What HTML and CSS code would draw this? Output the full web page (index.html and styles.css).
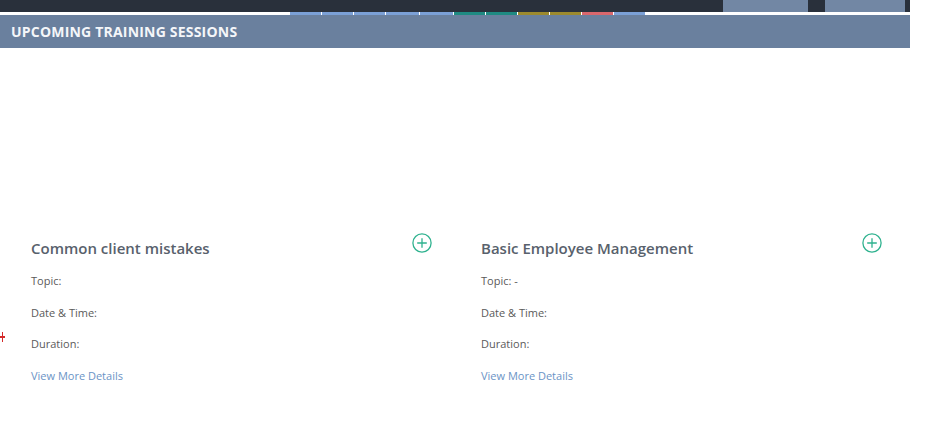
FILE: index.html
```html
<!DOCTYPE html>
<html lang="en">
<head>
<meta charset="utf-8">
<title>Upcoming Training Sessions</title>
<link rel="stylesheet" href="styles.css">
</head>
<body>
<div class="page">
  <div class="topbar">
    <div class="topbar-fill"></div>
    <div class="tab tab-a"></div>
    <div class="tab-sep"></div>
    <div class="tab tab-b"></div>
    <div class="tab-sep tab-end"></div>
  </div>
  <div class="strip">
    <div class="segments">
      <span class="seg seg-blue"></span>
      <span class="seg seg-blue"></span>
      <span class="seg seg-blue"></span>
      <span class="seg seg-blue"></span>
      <span class="seg seg-blue"></span>
      <span class="seg seg-teal"></span>
      <span class="seg seg-teal"></span>
      <span class="seg seg-olive"></span>
      <span class="seg seg-olive"></span>
      <span class="seg seg-red"></span>
      <span class="seg seg-blue"></span>
    </div>
  </div>
  <div class="section-header">UPCOMING TRAINING SESSIONS</div>

  <div class="cards">
    <div class="card">
      <div class="card-head">
        <h3 class="card-title">Common client mistakes</h3>
        <svg class="add-icon" width="20" height="20" viewBox="0 0 20 20" aria-hidden="true">
          <circle cx="10" cy="10" r="9.1" fill="none" stroke="#2fb28f" stroke-width="1.3"/>
          <path d="M10 5.2V14.8M5.2 10H14.8" stroke="#2fb28f" stroke-width="1.3" fill="none"/>
        </svg>
      </div>
      <div class="row">Topic:</div>
      <div class="row">Date &amp; Time:</div>
      <div class="row">Duration:</div>
      <div class="row"><a class="more" href="#">View More Details</a></div>
    </div>
    <div class="card">
      <div class="card-head">
        <h3 class="card-title">Basic Employee Management</h3>
        <svg class="add-icon" width="20" height="20" viewBox="0 0 20 20" aria-hidden="true">
          <circle cx="10" cy="10" r="9.1" fill="none" stroke="#2fb28f" stroke-width="1.3"/>
          <path d="M10 5.2V14.8M5.2 10H14.8" stroke="#2fb28f" stroke-width="1.3" fill="none"/>
        </svg>
      </div>
      <div class="row">Topic: -</div>
      <div class="row">Date &amp; Time:</div>
      <div class="row">Duration:</div>
      <div class="row"><a class="more" href="#">View More Details</a></div>
    </div>
  </div>
  <div class="red-mark"><span class="rm-h"></span><span class="rm-v"></span></div>
</div>
</body>
</html>
```

FILE: styles.css
```css
html, body {
  margin: 0;
  padding: 0;
  background: #ffffff;
}
body {
  font-family: "Open Sans", "Noto Sans", sans-serif;
}
.page {
  position: relative;
  width: 929px;
  height: 443px;
  overflow: hidden;
}
.topbar {
  width: 910px;
  height: 12px;
  display: flex;
  background: #29303b;
}
.topbar-fill {
  flex: 0 0 723px;
}
.tab {
  background: #7287a4;
}
.tab-a { flex: 0 0 85px; }
.tab-b { flex: 0 0 80px; }
.tab-sep { flex: 0 0 17px; }
.tab-end { flex: 0 0 5px; }

.strip {
  width: 910px;
  height: 3px;
  padding-left: 290px;
  box-sizing: border-box;
  background: #ffffff;
}
.segments {
  display: flex;
  gap: 1px;
  height: 3px;
}
.seg {
  display: block;
  width: 31px;
  height: 3px;
}
.seg:nth-child(4), .seg:nth-child(5) { width: 33px; }
.seg-blue { background: #7ba0d6; }
.seg-teal { background: #1f8a82; }
.seg-olive { background: #9c8a2e; }
.seg-red { background: #d9676d; }

.section-header {
  width: 910px;
  height: 33px;
  box-sizing: border-box;
  padding-left: 11px;
  background: #6a809e;
  color: #f4f6f9;
  font-weight: 700;
  font-size: 14px;
  line-height: 33px;
  letter-spacing: 0.2px;
}

.cards {
  display: grid;
  grid-template-columns: 450px 450px;
  margin-top: 188.5px;
}
.card {
  padding: 0 19px 0 31px;
}
.card-head {
  display: flex;
  justify-content: space-between;
  align-items: flex-start;
  height: 22px;
  margin-bottom: 6.5px;
}
.card-title {
  margin: 0;
  font-size: 15px;
  font-weight: 600;
  line-height: 22px;
  color: #58616c;
}
.add-icon {
  display: block;
  margin-top: -3.5px;
  margin-right: -1px;
}
.row {
  font-size: 11px;
  line-height: 31.5px;
  height: 31.5px;
  color: #5a5a5a;
}
.more {
  color: #6b94c6;
  text-decoration: none;
}

.red-mark {
  position: absolute;
  left: 0;
  top: 331px;
  width: 5px;
  height: 12px;
}
.rm-h {
  position: absolute;
  left: 0;
  top: 5px;
  width: 5px;
  height: 2px;
  background: #d42a2a;
}
.rm-v {
  position: absolute;
  left: 2px;
  top: 1px;
  width: 1px;
  height: 10px;
  background: #d42a2a;
}
```
